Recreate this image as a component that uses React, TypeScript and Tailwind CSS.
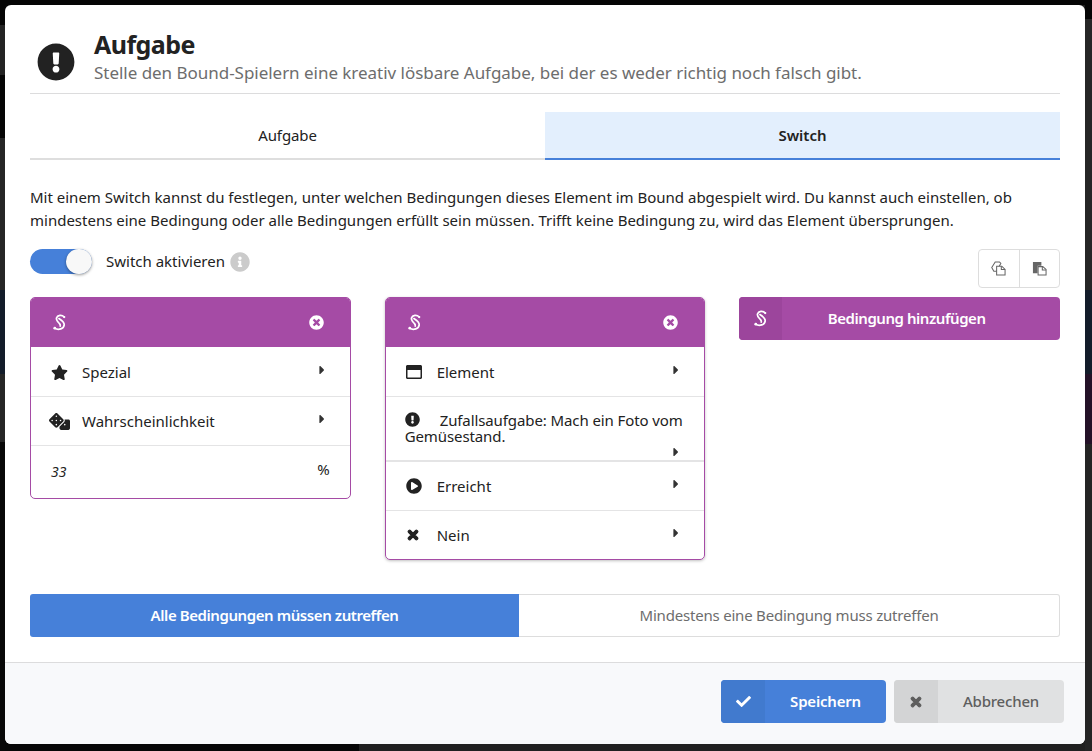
import { FaExclamationCircle, FaStar, FaDice, FaRegWindowMaximize, FaPlayCircle, FaTimes, FaTimesCircle, FaCaretRight, FaInfoCircle, FaCheck } from 'react-icons/fa'
import type { ReactNode } from 'react'

const font = "font-['Noto_Sans',sans-serif]"

// the stylised S of the condition blocks
function SwitchIcon({ className }: { className?: string }) {
  return (
    <svg viewBox="0 0 14 18" className={className} fill="none" stroke="currentColor" strokeLinecap="round" strokeWidth="1.800">
      <path d="M12 3.200C9.500.6 4.800 1 3.800 4.300 3.200 6.800 5.400 8.400 7 10.200 7.800 11.200 8 12 7.800 12.800" />
      <path d="M6.400 4.800C8.600 6.200 12.200 8.300 12 11.500 11.600 15.700 6 17.500 2 15.200" />
      <circle cx="12" cy="3.200" r="1.200" fill="currentColor" stroke="none" />
      <circle cx="2" cy="15" r="1.500" fill="currentColor" stroke="none" />
    </svg>
  )
}

function Row({ icon, label }: { icon: ReactNode; label: string }) {
  return (
    <div className="flex h-[49px] items-center border-b border-[#e4e4e5] pl-[20px] pr-[21px] last:h-[48px] last:border-b-0">
      <span className="flex w-[31px] shrink-0 text-[#222]">{icon}</span>
      <span className="flex-1 text-[#222]">{label}</span>
      <FaCaretRight className="mb-[5px] text-[14px] text-[#333]" />
    </div>
  )
}

function CardHead() {
  return (
    <div className="mb-[1px] flex h-[49px] items-center justify-between bg-[#a54ba5] pl-[21px] pr-[26px] text-white">
      <SwitchIcon className="h-[17px] w-[15px]" />
      <FaTimesCircle className="text-[15px]" />
    </div>
  )
}

export default function App() {
  return (
    <div className={`${font} flex h-[751px] w-[1092px] overflow-hidden bg-[linear-gradient(to_bottom,#050505_5px,transparent_5px),linear-gradient(to_right,#070707_359px,#202020_359px)] text-[15px] leading-[23px]`}>
      {/* page behind the overlay */}
      <div className="h-full w-[5px] shrink-0 bg-[linear-gradient(to_bottom,#050505_25px,#232323_25px,#232323_75px,#050505_75px,#050505_138px,#262626_138px,#262626_290px,#131c2a_290px,#131c2a_374px,#262626_374px,#262626_442px,#080808_442px)]" />

      <div className="mt-[5px] flex h-[739px] w-[1080px] shrink-0 flex-col overflow-hidden rounded-[6px] bg-white">
        <div className="flex-1 px-[25px]">
          {/* header */}
          <div className="flex h-[89px] items-start border-b border-[#dcdcdd] pl-[7px] pt-[21px]">
            <FaExclamationCircle className="mt-[17px] h-[38px] w-[38px] shrink-0 text-[#222]" />
            <div className="ml-[19px]">
              <div className="mt-[-1px] text-[25px] font-bold leading-[38px] tracking-[-0.55px] text-[#222]">Aufgabe</div>
              <div className="mt-[-2px] text-[17px] leading-[23px] tracking-[-0.03px] text-[#6d6d6d]">Stelle den Bound-Spielern eine kreativ lösbare Aufgabe, bei der es weder richtig noch falsch gibt.</div>
            </div>
          </div>

          {/* tabs */}
          <div className="mt-[18px] grid h-[48px] grid-cols-2 text-center">
            <div className="flex items-center justify-center border-b-2 border-[#dedede] tracking-[-0.1px] text-[#222]">Aufgabe</div>
            <div className="flex items-center justify-center border-b-2 border-[#4680d9] bg-[#e3effd] font-semibold text-[#222]">Switch</div>
          </div>

          <p className="mt-[26px] text-[#222]">
            Mit einem Switch kannst du festlegen, unter welchen Bedingungen dieses Element im Bound abgespielt wird. Du kannst auch einstellen, ob mindestens eine Bedingung oder alle Bedingungen erfüllt sein müssen. Trifft keine Bedingung zu, wird das Element übersprungen.
          </p>

          {/* switch + copy/paste */}
          <div className="mt-[17px] flex h-[39px] items-start justify-between">
            <div className="flex items-center">
              <div className="flex h-[25px] w-[62px] items-center justify-end rounded-full bg-[#4680d9]">
                <div className="h-[25px] w-[26px] rounded-full bg-[#f8f8f8] shadow-[0_1px_3px_rgba(0,0,0,0.4)]" />
              </div>
              <span className="ml-[14px] text-[#222]">Switch aktivieren</span>
              <FaInfoCircle className="ml-[5px] h-[20px] w-[20px] text-[#cbcbcb]" />
            </div>
            <div className="flex h-[39px] w-[82px] rounded-[4px] border border-[#ddd]">
              <div className="flex flex-1 items-center justify-center border-r border-[#ddd] text-[#666]">
                <svg viewBox="0 0 16 16" className="h-[15px] w-[15px]" fill="#fff" stroke="currentColor" strokeWidth="1.100">
                  <path d="M.8 7 4.500 1H9l1.500 1.500L6 11H3z" />
                  <path d="M6 5.500h5.500L15 9v6H6z" />
                  <path d="M11 5.500V9h4" fill="none" />
                </svg>
              </div>
              <div className="flex flex-1 items-center justify-center text-[#666]">
                <svg viewBox="0 0 16 16" className="h-[15px] w-[15px]">
                  <path d="M1 1h9v4H6v8H1z" fill="currentColor" />
                  <path d="M6.500 6h5l3.500 3v6H6.500z" fill="#fff" stroke="currentColor" strokeWidth="1.100" />
                  <path d="M11 6v3.500h4" fill="none" stroke="currentColor" strokeWidth="1.100" />
                </svg>
              </div>
            </div>
          </div>

          {/* conditions */}
          <div className="mt-[9px] grid h-[297px] grid-cols-3 items-start gap-[34px]">
            <div className="overflow-hidden rounded-[5px] border border-[#a54ba5]">
              <CardHead />
              <Row icon={<FaStar className="text-[17px]" />} label="Spezial" />
              <Row icon={<FaDice className="ml-[-2px] text-[21px]" />} label="Wahrscheinlichkeit" />
              <div className="flex h-[52px] items-center justify-between pb-[2px] pl-[20px] pr-[20px] text-[#222]">
                <span className="text-[14px] italic">33</span>
                <span className="mb-[3px]">%</span>
              </div>
            </div>

            <div className="overflow-hidden rounded-[5px] border border-[#a54ba5] shadow-[0_1px_3px_rgba(0,0,0,0.25)]">
              <CardHead />
              <Row icon={<FaRegWindowMaximize className="text-[16px]" />} label="Element" />
              <div className="relative h-[65px] border-b-2 border-[#e4e4e5] pl-[19px] pr-[10px] pt-[15px] leading-[16px] tracking-[-0.1px] text-[#222]">
                <FaExclamationCircle className="mr-[20px] inline-block align-[-1px] text-[15px]" />
                Zufallsaufgabe: Mach ein Foto vom Gemüsestand.
                <FaCaretRight className="absolute bottom-[1px] right-[21px] text-[14px] text-[#333]" />
              </div>
              <Row icon={<FaPlayCircle className="text-[16px]" />} label="Erreicht" />
              <Row icon={<FaTimes stroke="currentColor" strokeWidth={45} className="text-[14px]" />} label="Nein" />
            </div>

            <div className="flex h-[43px] overflow-hidden rounded-[4px] bg-[#a54ba5] font-semibold tracking-[-0.45px] text-white">
              <div className="flex w-[43px] items-center justify-center bg-[#9c459c]">
                <SwitchIcon className="h-[17px] w-[15px]" />
              </div>
              <div className="flex flex-1 items-center justify-center pr-[29px]">Bedingung hinzufügen</div>
            </div>
          </div>

          {/* match mode */}
          <div className="grid h-[43px] grid-cols-[489px_1fr] text-center">
            <div className="flex items-center justify-center rounded-l-[3px] bg-[#4680d9] font-semibold tracking-[-0.42px] text-white">Alle Bedingungen müssen zutreffen</div>
            <div className="flex items-center justify-center rounded-r-[3px] border border-l-0 border-[#ddd] tracking-[-0.2px] text-[#6d6d6d]">Mindestens eine Bedingung muss zutreffen</div>
          </div>
        </div>

        {/* footer */}
        <div className="flex h-[82px] items-start justify-end gap-[8px] border-t border-[#dcdcdd] bg-[#f8f9fb] pr-[21px] pt-[17px]">
          <div className="flex h-[43px] w-[165px] overflow-hidden rounded-[4px] bg-[#4680d9] font-semibold tracking-[-0.2px] text-white">
            <div className="flex w-[44px] items-center justify-center bg-[#417ace]"><FaCheck className="text-[15px]" /></div>
            <div className="flex flex-1 items-center justify-center">Speichern</div>
          </div>
          <div className="flex h-[43px] w-[170px] overflow-hidden rounded-[4px] bg-[#e0e1e2] font-medium tracking-[-0.2px] text-[#5e5e5e]">
            <div className="flex w-[44px] items-center justify-center bg-[#d3d4d5]"><FaTimes stroke="currentColor" strokeWidth={45} className="text-[14px]" /></div>
            <div className="flex flex-1 items-center justify-center">Abbrechen</div>
          </div>
        </div>
      </div>

      <div className="h-full w-[7px] shrink-0 bg-[linear-gradient(to_bottom,#050505_19px,#262626_19px,#262626_290px,#131c2a_290px,#131c2a_374px,#241228_374px,#241228_444px,#242424_444px)]" />
    </div>
  )
}
